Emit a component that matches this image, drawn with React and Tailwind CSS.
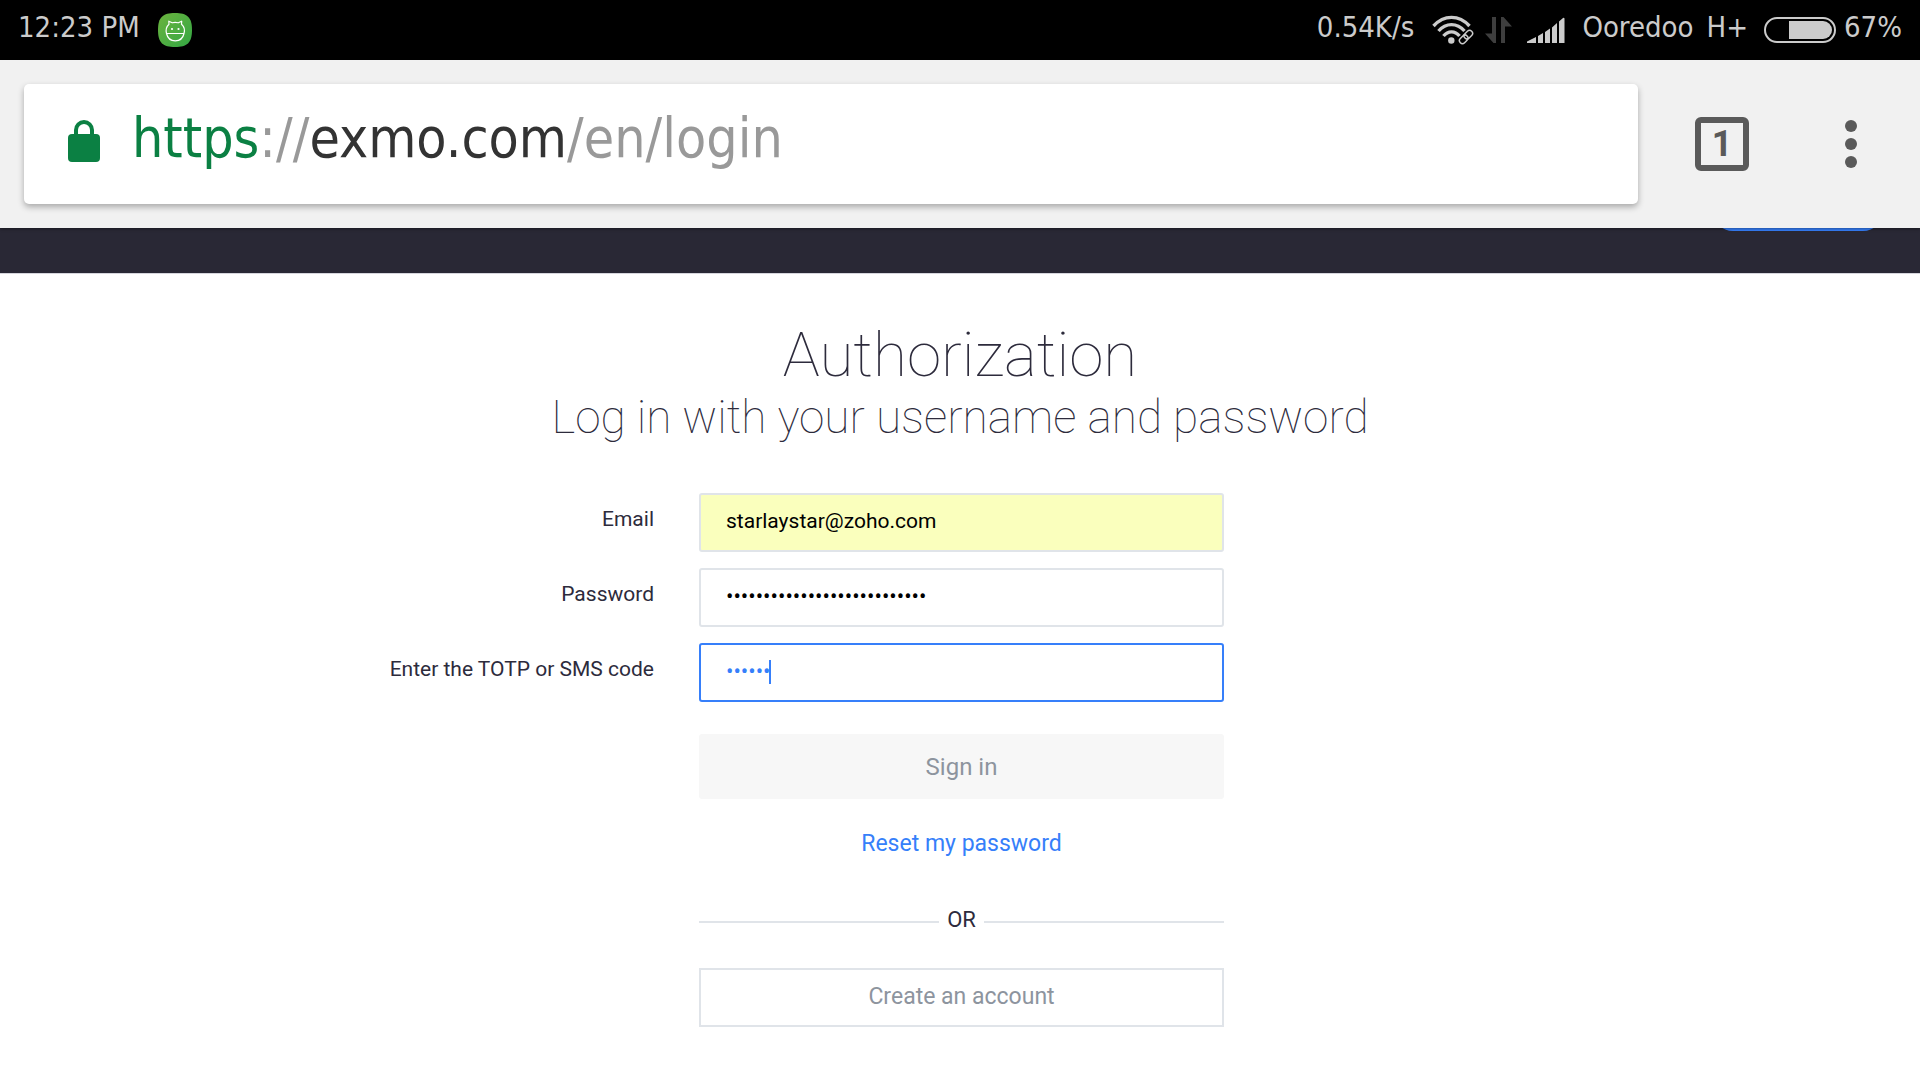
import React from "react";

const statusText = "font-['DejaVu_Sans_Condensed','DejaVu_Sans',sans-serif] text-[29px] leading-9";

function StatusBar() {
  return (
    <header className={`flex h-[60px] items-center justify-between bg-black pl-[18px] pr-[18px] text-[#cbcbcb] ${statusText}`}>
      <div className="flex items-center gap-[18px]">
        <span className="pb-1.5">12:23 PM</span>
        <svg width="34" height="34" viewBox="0 0 34 34" aria-hidden="true">
          <defs>
            <linearGradient id="badge" x1="0" y1="0" x2="1" y2="1">
              <stop offset="0" stopColor="#6cb33e" />
              <stop offset="1" stopColor="#33a744" />
            </linearGradient>
          </defs>
          <path d="M17 0C29 0 34 4 34 17s-5 17-17 17S0 30 0 17 5 0 17 0Z" fill="url(#badge)" />
          <path
            d="M8.5 20.5H26M8.5 20.5C7.6 17 8.6 13.5 11 11.3L10.8 8.2 14.2 9.8C16 9.2 18.4 9.2 20.3 9.8L23.7 8.2 23.5 11.3C26 13.5 27 17 26 20.5 25 25 21.5 27.8 17.3 27.8S9.5 25 8.5 20.5Z"
            fill="none"
            stroke="#fff"
            strokeWidth="1.2"
            strokeLinejoin="round"
          />
          <circle cx="14" cy="16" r="1.1" fill="#fff" />
          <circle cx="20.5" cy="16" r="1.1" fill="#fff" />
        </svg>
      </div>
      <div className="flex items-center">
        <span className="pb-1.5">0.54K/s</span>
        <svg className="ml-[18px]" width="42" height="30" viewBox="0 0 42 30" aria-hidden="true">
          <g fill="none" stroke="#cbcbcb" strokeWidth="3.4">
            <path d="M1.5 11C12 -0.5 27 -0.5 37.5 11" />
            <path d="M6.5 16C14 7.500 25 7.500 32.5 16" />
            <path d="M11.5 21C16 15.500 23 15.500 27.5 21" />
          </g>
          <circle cx="19.3" cy="25.5" r="3.2" fill="#cbcbcb" />
          <g transform="rotate(-45 34 22)">
            <rect x="25" y="17.5" width="18" height="9" fill="#000" />
            <g fill="none" stroke="#cbcbcb" strokeWidth="1.5">
              <rect x="26" y="19" width="9.5" height="6" rx="3" />
              <rect x="32.5" y="19" width="9.5" height="6" rx="3" />
            </g>
          </g>
        </svg>
        <svg className="ml-[11px]" width="27" height="26" viewBox="0 0 27 26" fill="#3e3e3e" aria-hidden="true">
          <path d="M7 0H11V26H8.5L0 16.5H7ZM16 0H18.5L27 9.5H20V26H16Z" />
        </svg>
        <svg className="ml-[15px]" width="38" height="26" viewBox="0 0 38 26" fill="#cbcbcb" aria-hidden="true">
          <path d="M0 26V24.5L9 20V26ZM11 19L16 16V26H11ZM18 15L23 11.5V26H18ZM25 10.5L30 6V26H25ZM32 4.5L36 1Q37.5 0 37.5 2V26H32Z" />
        </svg>
        <span className="ml-[17px] pb-1.5">Ooredoo</span>
        <span className="ml-[13px] pb-1.5">H+</span>
        <svg className="ml-4" width="72" height="26" viewBox="0 0 72 26" aria-hidden="true">
          <rect x="1" y="1" width="70" height="24" rx="12" fill="none" stroke="#cbcbcb" strokeWidth="2" />
          <path d="M25 4H59a9 9 0 0 1 0 18H25Z" fill="#cbcbcb" />
        </svg>
        <span className="ml-2 pb-1.5">67%</span>
      </div>
    </header>
  );
}

function Toolbar() {
  return (
    <div className="relative z-10 flex h-[168px] items-center bg-[#f1f1f1] pl-6 pr-[45px] shadow-[0_1px_3px_rgba(0,0,0,0.4)]">
      <div className="flex h-[120px] grow items-center rounded-[5px] bg-white pl-11 shadow-[0_3px_6px_rgba(0,0,0,0.3)]">
        <svg className="mb-1.5" width="33" height="44" viewBox="0 0 33 44" aria-hidden="true">
          <rect y="15" width="32" height="28" rx="4" fill="#0b8043" />
          <path d="M8 17V11a8 8 0 0 1 16 0V17" fill="none" stroke="#0b8043" strokeWidth="4" />
        </svg>
        <a href="#login" className="ml-[31px] pb-3 font-['DejaVu_Sans_Condensed','DejaVu_Sans',sans-serif] text-[55px] leading-[72px] text-[#999]">
          <span className="text-[#0b8043]">https</span>://<span className="text-[#333]">exmo.com</span>/en/login
        </a>
      </div>
      <button aria-label="Open tabs" className="ml-[57px] flex size-[54px] shrink-0 items-center justify-center rounded-md border-[6px] border-[#5a5a5a] font-[Roboto,sans-serif] text-[36px] leading-[42px] font-bold text-[#5a5a5a]">
        1
      </button>
      <button aria-label="Menu" className="ml-[78px] flex w-12 shrink-0 flex-col items-center gap-1.5">
        <span className="size-3 rounded-full bg-[#5a5a5a]" />
        <span className="size-3 rounded-full bg-[#5a5a5a]" />
        <span className="size-3 rounded-full bg-[#5a5a5a]" />
      </button>
    </div>
  );
}

function Field({ id, label, type, value, tone, children }) {
  return (
    <>
      <label htmlFor={id} className="pr-[45px] pb-2 text-right">{label}</label>
      <div className="relative">
        <input
          id={id}
          type={type}
          defaultValue={value}
          className={`block h-[59px] w-full rounded-[3px] border-2 px-[25px] pb-[3px] outline-none ${tone}`}
        />
        {children}
      </div>
      <span />
    </>
  );
}

export default function App() {
  return (
    <div className="min-h-screen bg-white font-[Roboto,sans-serif] text-[#2d2b3c]">
      <StatusBar />
      <Toolbar />
      <div className="flex h-[46px] items-start justify-end overflow-hidden border-b border-[#d5d5dc] bg-[#292835] pr-[37px]">
        <div className="-mt-[37px] h-10 w-[170px] rounded-full bg-[#367ffa]" />
      </div>
      <main className="pt-[46px]">
        <h1 className="text-center text-[62px] leading-[70px] font-thin">Authorization</h1>
        <h2 className="text-center text-[46px] leading-[54px] font-thin">Log in with your username and password</h2>
        <form className="mt-[49px] grid grid-cols-[1fr_525px_1fr] items-center gap-y-4 pl-[3px] text-[21px] leading-7">
          <Field id="email" label="Email" type="email" value="starlaystar@zoho.com" tone="border-[#e0e4e9] bg-[#faffbd] text-black" />
          <Field id="password" label="Password" type="password" value="abcdefghijklmnopqrstuvwxyza" tone="border-[#e0e4e9] bg-white text-[22px] text-black" />
          <Field id="code" label="Enter the TOTP or SMS code" type="password" value="123456" tone="border-[#367ffa] bg-white text-[22px] text-[#367ffa]">
            <span className="absolute top-[17px] left-[70px] h-6 w-0.5 bg-[#367ffa]" />
          </Field>
          <div className="col-start-2 flex flex-col items-center pt-4">
            <button type="submit" className="h-[65px] w-full rounded-[3px] bg-[#f7f7f7] text-[24px] text-[#8d949e]">Sign in</button>
            <a href="#reset" className="mt-[31px] text-[23px] text-[#367ffa]">Reset my password</a>
            <div className="mt-12 flex w-full items-center gap-2">
              <span className="mt-1 h-0.5 grow bg-[#e0e4e9]" />
              <span className="text-[22px]">OR</span>
              <span className="mt-1 h-0.5 grow bg-[#e0e4e9]" />
            </div>
            <button type="button" className="mt-[34px] h-[59px] w-full border-2 border-[#e0e4e9] pb-0.5 text-[23px] text-[#8d949e]">Create an account</button>
          </div>
        </form>
      </main>
    </div>
  );
}
